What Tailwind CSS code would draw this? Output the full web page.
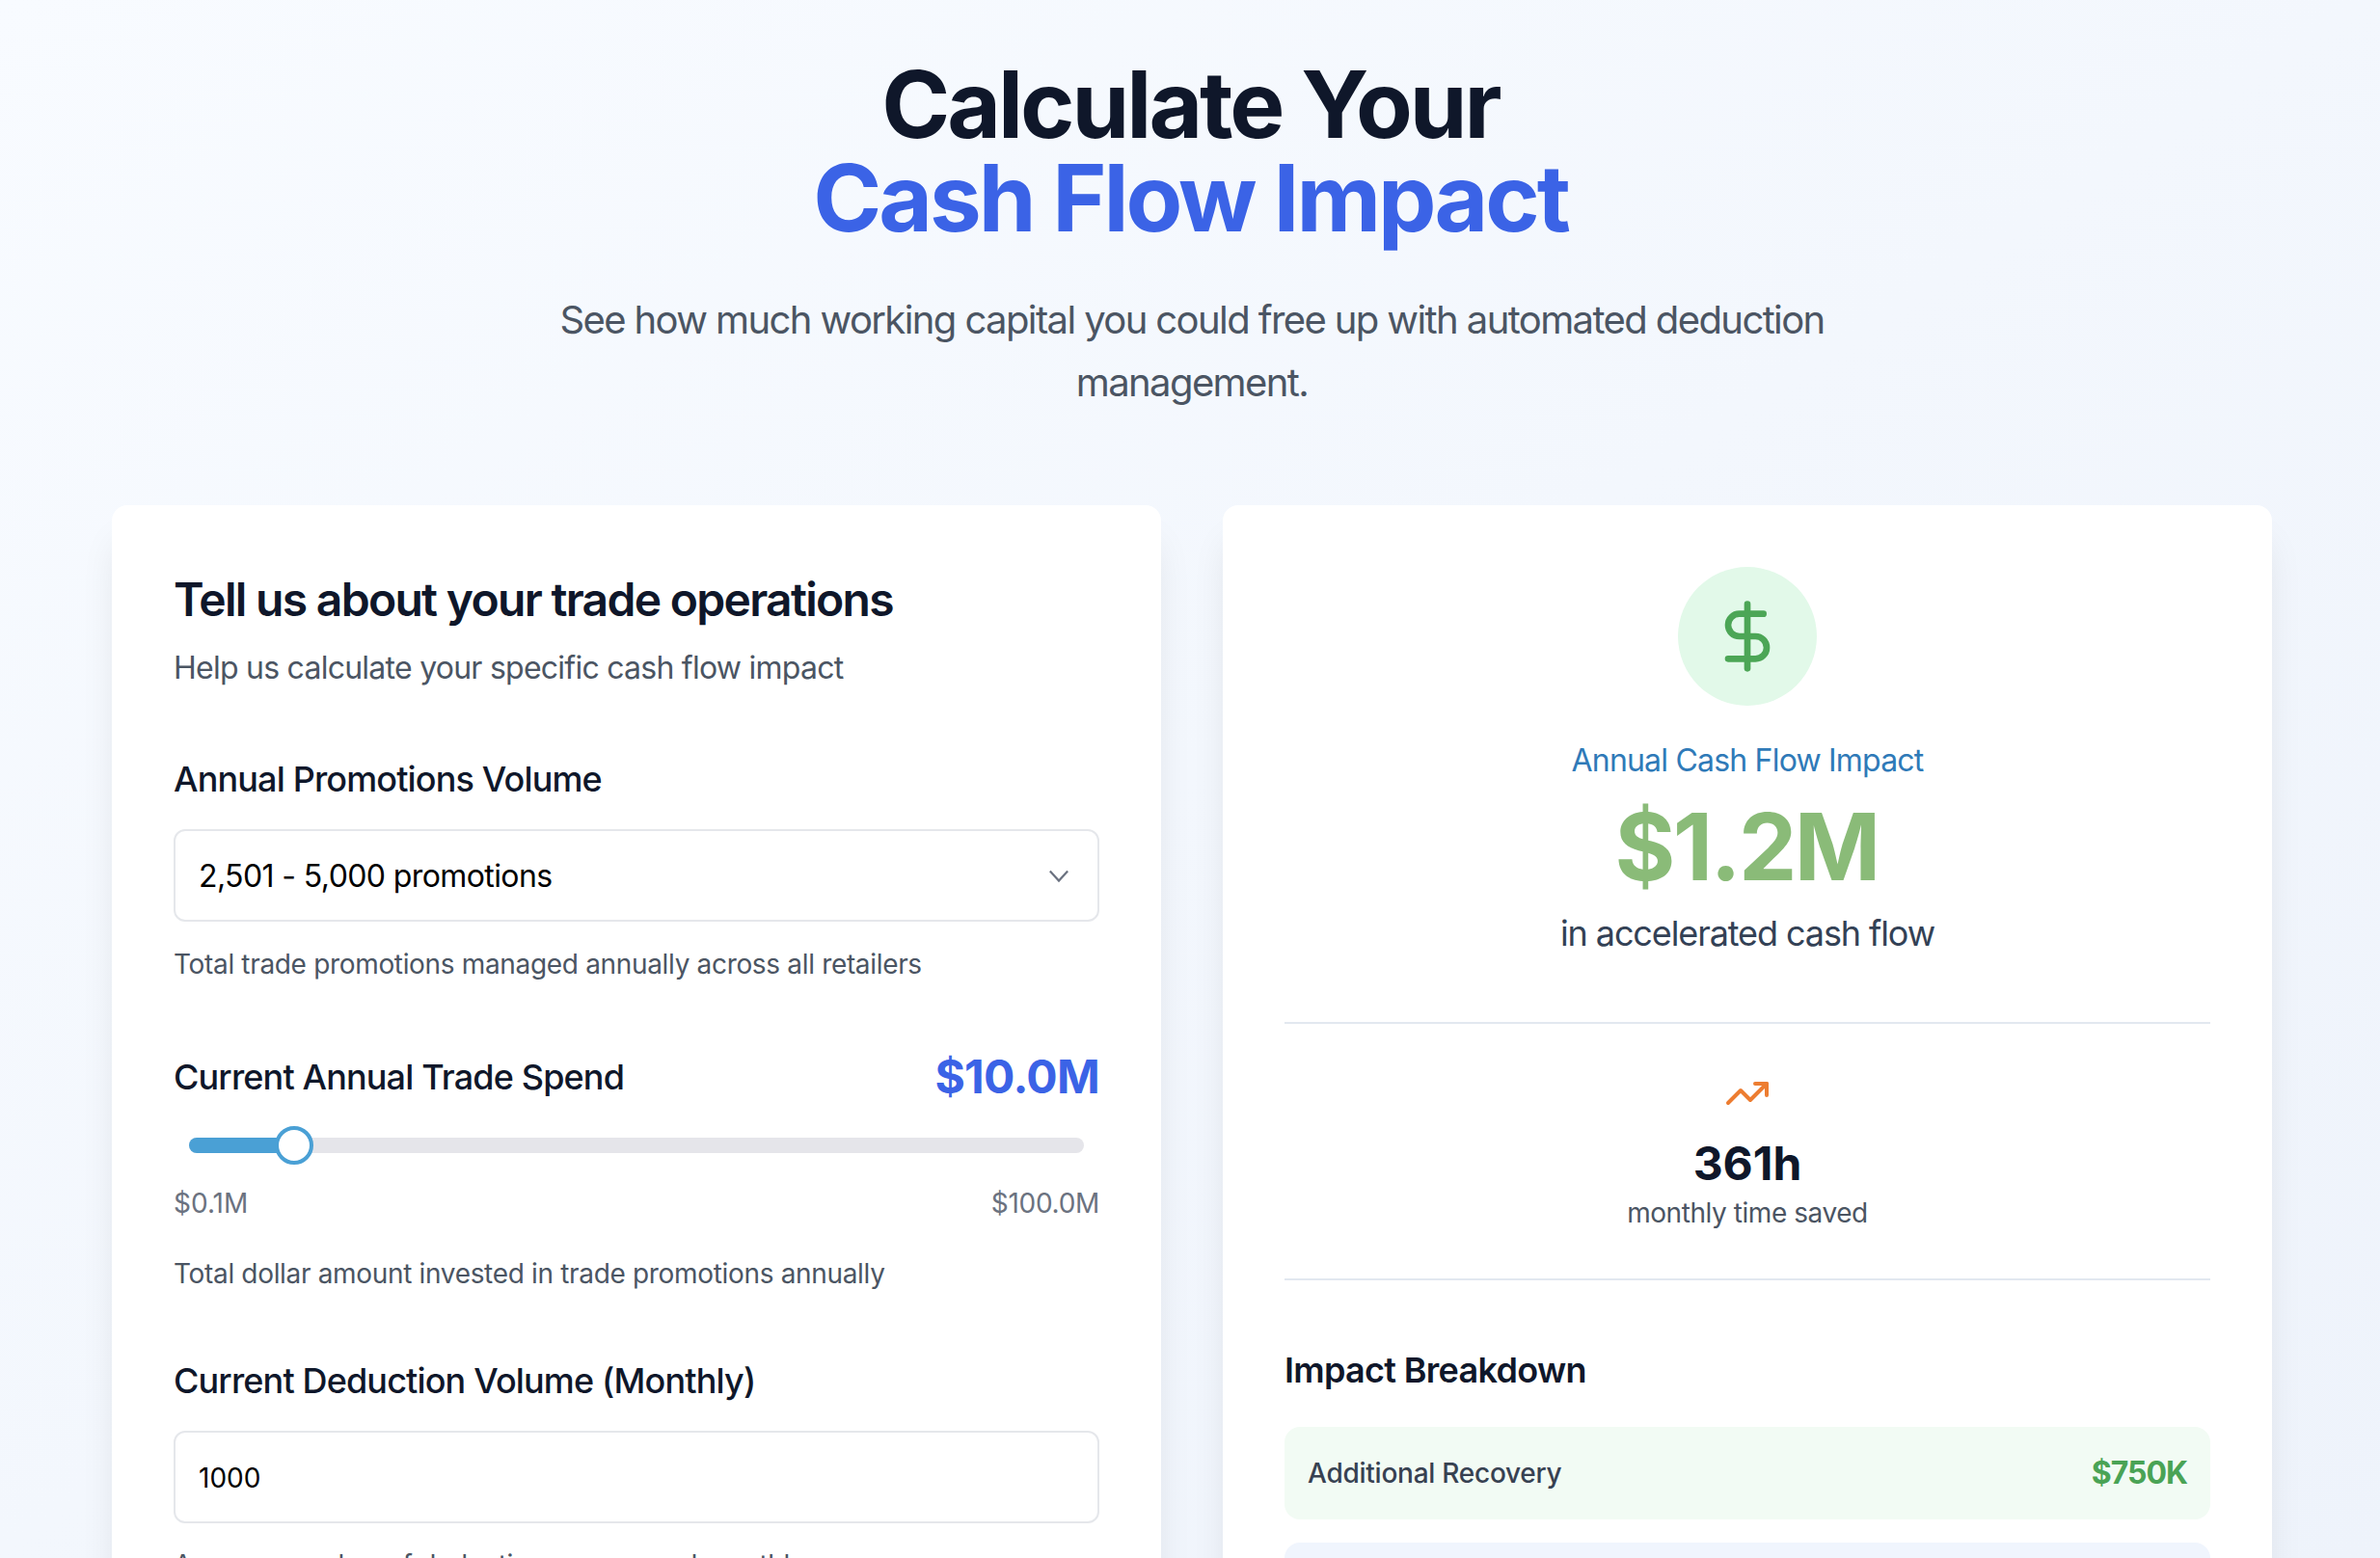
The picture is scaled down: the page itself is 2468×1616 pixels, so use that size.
<!DOCTYPE html>
<html lang="en">
<head>
    <meta charset="UTF-8">
    <meta name="viewport" content="width=device-width, initial-scale=1.0">
    <title>Cash Flow Impact Calculator</title>
    <script src="https://cdn.jsdelivr.net/npm/@tailwindcss/browser@4"></script>
</head>
<body class="font-['Inter',sans-serif]">
    <div class="h-[1616px] overflow-hidden bg-gradient-to-br from-[#f8fbff] to-[#eef3fb] pt-[60px] pr-[112px] pl-[116px]">
        <!-- Header -->
        <header class="text-center">
            <h1 class="pr-[3px] text-[96px] leading-[97px] font-bold tracking-[-3px] text-[#0f172a]">
                Calculate Your<br><span class="text-[#3b63e6]">Cash Flow Impact</span>
            </h1>
            <p class="mx-auto mt-[45px] w-[1400px] text-[40px] leading-[65px] tracking-[-1.6px] text-[#4b5563]">
                See how much working capital you could free up with automated deduction management.
            </p>
        </header>

        <div class="mt-[95px] grid grid-cols-2 gap-[64px]">
            <!-- Inputs card -->
            <section class="rounded-[16px] bg-white p-[64px] shadow-[0_32px_40px_-8px_rgba(0,0,0,0.1)]">
                <h2 class="text-[48px] leading-[67px] font-semibold tracking-[-1.7px] text-[#0f172a]">Tell us about your trade operations</h2>
                <p class="mt-[14px] text-[32px] leading-[48px] tracking-[-0.75px] text-[#4b5563]">Help us calculate your specific cash flow impact</p>

                <label class="mt-[65px] block text-[36px] leading-[52px] font-medium tracking-[-0.85px] text-[#0f172a]" for="promotions">Annual Promotions Volume</label>
                <div class="relative mt-[26px]">
                    <select id="promotions" class="h-[96px] w-full appearance-none rounded-[12px] border-2 border-[#e5e7eb] bg-white px-[24px] pt-[1px] text-[32px] tracking-[-0.6px] text-black">
                        <option>2,501 - 5,000 promotions</option>
                    </select>
                    <svg class="absolute top-[37px] right-[31px] h-[22px] w-[22px]" viewBox="0 0 24 24" fill="none" stroke="#6b7280" stroke-width="2.4"><path d="M2 7l10 11L22 7"/></svg>
                </div>
                <p class="mt-[24px] text-[28px] leading-[40px] tracking-[-0.33px] text-[#4b5563]">Total trade promotions managed annually across all retailers</p>

                <div class="mt-[71px] flex items-center justify-between">
                    <span class="text-[36px] leading-[52px] font-medium tracking-[-0.85px] text-[#0f172a]">Current Annual Trade Spend</span>
                    <span class="text-[48px] leading-[52px] font-bold tracking-[-0.7px] text-[#3b63e6]">$10.0M</span>
                </div>
                <!-- Slider -->
                <div class="relative mx-[16px] mt-[37px] h-[16px] rounded-full bg-[#e5e5ea]">
                    <div class="h-full w-[100px] rounded-l-full bg-[#4aa0d5]"></div>
                    <div class="absolute top-[-12px] left-[89px] h-[40px] w-[40px] rounded-full border-[4px] border-[#4aa0d5] bg-white"></div>
                </div>
                <div class="mt-[32px] flex justify-between text-[28px] leading-[40px] text-[#6b7280]">
                    <span>$0.1M</span>
                    <span class="tracking-[-0.3px]">$100.0M</span>
                </div>
                <p class="mt-[33px] text-[28px] leading-[40px] tracking-[-0.33px] text-[#4b5563]">Total dollar amount invested in trade promotions annually</p>

                <label class="mt-[65px] block text-[36px] leading-[52px] font-medium tracking-[-0.85px] text-[#0f172a]" for="deductions">Current Deduction Volume (Monthly)</label>
                <input id="deductions" type="text" value="1000" class="mt-[26px] block h-[96px] w-full rounded-[12px] border-2 border-[#e5e7eb] bg-white px-[24px] pt-[1px] text-[28px] text-black">
                <p class="mt-[23px] text-[28px] leading-[40px] tracking-[-0.33px] text-[#4b5563]">Average number of deductions processed monthly</p>
            </section>

            <!-- Results card -->
            <section class="rounded-[16px] bg-white p-[64px] shadow-[0_32px_40px_-8px_rgba(0,0,0,0.1)]">
                <div class="border-b-2 border-[#e2e8f0] pb-[66px] text-center">
                    <div class="mx-auto flex h-[144px] w-[144px] items-center justify-center rounded-full bg-[#e2f9e9]">
                        <svg class="h-[80px] w-[80px]" viewBox="0 0 24 24" fill="none" stroke="#4ca656" stroke-width="2" stroke-linecap="round" stroke-linejoin="round"><line x1="12" y1="2" x2="12" y2="22"/><path d="M17 5H9.5a3.5 3.5 0 0 0 0 7h5a3.5 3.5 0 0 1 0 7H6"/></svg>
                    </div>
                    <p class="mt-[33px] text-[32px] leading-[48px] tracking-[-0.8px] text-[#2f7ab8]">Annual Cash Flow Impact</p>
                    <p class="mt-[17px] pr-[2px] text-[96px] leading-[96px] font-bold tracking-[-2.6px] text-[#8abb78]">$1.2M</p>
                    <p class="mt-[16px] text-[36px] leading-[52px] tracking-[-1.1px] text-[#334155]">in accelerated cash flow</p>
                </div>

                <div class="flex flex-col items-center border-b-2 border-[#e2e8f0] py-[48px]">
                    <svg class="h-[48px] w-[48px]" viewBox="0 0 24 24" fill="none" stroke="#ed7d31" stroke-width="2" stroke-linecap="round" stroke-linejoin="round"><polyline points="22 7 13.5 15.5 8.5 10.5 2 17"/><polyline points="16 7 22 7 22 13"/></svg>
                    <p class="mt-[21px] text-[48px] leading-[56px] font-bold text-[#0f172a]">361h</p>
                    <p class="mt-[3px] text-[28px] leading-[40px] tracking-[-0.44px] text-[#4b5563]">monthly time saved</p>
                </div>

                <h3 class="mt-[65px] text-[36px] leading-[56px] font-semibold tracking-[-0.7px] text-[#0f172a]">Impact Breakdown</h3>
                <div class="mt-[31px] flex flex-col gap-[24px]">
                    <div class="flex h-[96px] items-center justify-between rounded-[16px] bg-[#f2fbf4] px-[24px]">
                        <span class="text-[28px] font-medium tracking-[-0.25px] text-[#374151]">Additional Recovery</span>
                        <span class="text-[32px] font-bold tracking-[-1px] text-[#4aa355]">$750K</span>
                    </div>
                    <div class="flex h-[96px] items-center justify-between rounded-[16px] bg-[#f0f5fd] px-[24px]"></div>
                </div>
            </section>
        </div>
    </div>
</body>
</html>
